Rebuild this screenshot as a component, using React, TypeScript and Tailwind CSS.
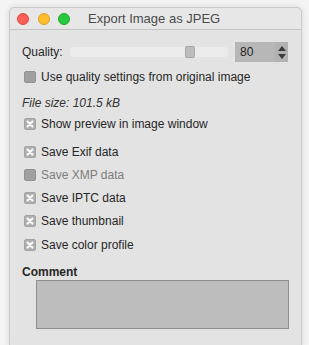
const FONT = { fontFamily: '"Liberation Sans", Arial, sans-serif' };

function CheckBox({ checked }: { checked: boolean }) {
  if (!checked) {
    return <span className="h-[12px] w-[12px] shrink-0 rounded-[2px] border border-[#939393] bg-[#a0a0a0]" />;
  }
  return (
    <span className="flex h-[12px] w-[12px] shrink-0 items-center justify-center rounded-[2px] border border-[#a3a3a3] bg-[#b0b0b0]">
      <svg width="8" height="8" viewBox="0 0 8 8" aria-hidden>
        <path d="M1.5 1.5L6.5 6.5M6.5 1.5L1.5 6.5" stroke="#ffffff" strokeWidth="2" strokeLinecap="round" />
      </svg>
    </span>
  );
}

function Row({ label, checked, disabled, className }: { label: string; checked: boolean; disabled?: boolean; className: string }) {
  return (
    <div className={`flex h-[20px] items-center gap-[5px] pl-[2px] ${className}`}>
      <CheckBox checked={checked} />
      <span className={`text-[12px] ${disabled ? "text-[#7d7d7d]" : "text-[#262626]"}`}>{label}</span>
    </div>
  );
}

export default function App() {
  return (
    <div className="h-[345px] w-[309px] overflow-hidden bg-[#f4f4f4] pl-[9px] pt-[7px]" style={FONT}>
      <div className="h-[340px] w-[293px] rounded-t-[5px] border border-[#cbcbcb] bg-[#e3e3e3] shadow-[0_0_6px_rgba(0,0,0,0.12)]">
        {/* title bar */}
        <div className="flex h-[22px] items-center rounded-t-[5px] border-b border-[#c4c4c4] bg-[#e7e7e7] pl-[7px]">
          <span className="h-[12px] w-[12px] rounded-full border border-[#e2483f] bg-[#fc5f57]" />
          <span className="ml-[9px] h-[12px] w-[12px] rounded-full border border-[#dea123] bg-[#fdbc2e]" />
          <span className="ml-[8px] h-[12px] w-[12px] rounded-full border border-[#1aab29] bg-[#28c840]" />
          <span className="ml-[18px] text-[13px] text-[#4a4a4a]">Export Image as JPEG</span>
        </div>

        <div className="pl-[12px] pr-[13px]">
          {/* quality */}
          <div className="mt-[12px] flex h-[20px] items-center">
            <span className="w-[48px] text-[12px] text-[#262626]">Quality:</span>
            <div className="relative h-[10px] w-[158px] rounded-[3px] bg-[#ebebeb]">
              <span className="absolute left-[115px] top-[-1px] h-[12px] w-[10px] rounded-[2px] border border-[#a9a9a9] bg-[#bcbcbc]" />
            </div>
            <div className="ml-[7px] flex h-[20px] w-[53px] items-center bg-[#b7b7b7]">
              <span className="pl-[5px] text-[12px] text-[#1e1e1e]">80</span>
              <span className="ml-auto flex h-full w-[13px] flex-col items-center justify-center gap-[3px] bg-[#b2b2b2]">
                <svg width="8" height="5" viewBox="0 0 8 5" aria-hidden>
                  <path d="M0 5L4 0L8 5Z" fill="#3a3a3a" />
                </svg>
                <svg width="8" height="5" viewBox="0 0 8 5" aria-hidden>
                  <path d="M0 0L4 5L8 0Z" fill="#3a3a3a" />
                </svg>
              </span>
            </div>
          </div>

          <Row label="Use quality settings from original image" checked={false} className="mt-[5px]" />

          <div className="mt-[6px] flex h-[20px] items-center text-[12px] italic text-[#333333]">File size: 101.5 kB</div>

          <Row label="Show preview in image window" checked className="mt-[1px]" />
          <Row label="Save Exif data" checked className="mt-[8px]" />
          <Row label="Save XMP data" checked={false} disabled className="mt-[3px]" />
          <Row label="Save IPTC data" checked className="mt-[3px]" />
          <Row label="Save thumbnail" checked className="mt-[3px]" />
          <Row label="Save color profile" checked className="mt-[4px]" />

          <div className="mt-[8px] flex h-[17px] items-center text-[12px] font-bold text-[#262626]">Comment</div>
          <div className="ml-[14px] h-[49px] w-[253px] border border-[#8e8e8e] bg-[#bdbdbd]" />
        </div>
      </div>
    </div>
  );
}
